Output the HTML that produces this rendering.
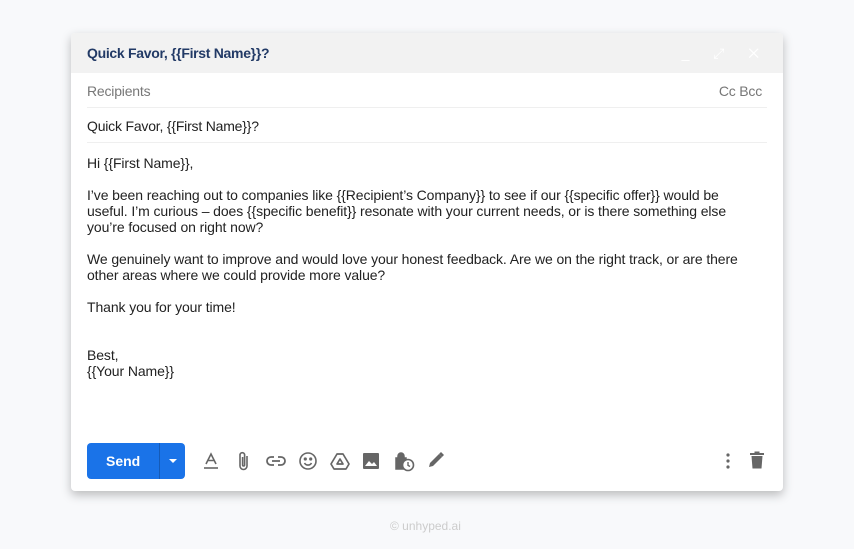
<!DOCTYPE html>
<html><head><meta charset="utf-8"><style>
*{margin:0;padding:0;box-sizing:border-box}
body{width:854px;height:549px;background:#f8f9fb;font-family:"Liberation Sans",sans-serif;position:relative;overflow:hidden}
.card{position:absolute;left:71px;top:33px;width:712px;height:458px;background:#fff;border-radius:4px;box-shadow:0 4px 10px rgba(0,0,0,.25);overflow:hidden}
.hdr{height:40px;background:#f2f2f2;padding-left:16px;line-height:40px;font-size:14px;color:#223a66;font-weight:bold;letter-spacing:-.3px}
.hicons{position:absolute;right:14px;top:0;color:#fff;font-size:14px;line-height:40px;letter-spacing:10px}
.row{margin:0 16px;height:35px;border-bottom:1px solid #efefef;font-size:14px;line-height:36px;letter-spacing:-.2px}
.body{padding:12px 0 0 16px;width:678px;font-size:14px;color:#222;line-height:16px;letter-spacing:-.1px}
.body p{margin-bottom:16px}
.send{position:absolute;left:16px;top:410px;width:98px;height:36px;background:#1a73e8;border-radius:4px;color:#fff;font-size:14px;font-weight:bold}
.send span{position:absolute;left:19px;top:10px}
.send i{position:absolute;left:72px;top:0;width:1px;height:36px;background:#155bb8}
.send b{position:absolute;left:82px;top:16px;border-left:4px solid transparent;border-right:4px solid transparent;border-top:4px solid #fff}
svg{position:absolute}
.foot{position:absolute;left:390px;top:519px;font-size:12px;color:#ccc}
</style></head><body>
<div class="card">
<div class="hdr">Quick Favor, {{First Name}}?</div>
<div class="hicons">_ ⤢ ✕</div>
<div class="row" style="color:#777">Recipients<span style="float:right;margin-right:5px">Cc Bcc</span></div>
<div class="row" style="color:#222">Quick Favor, {{First Name}}?</div>
<div class="body">
<p>Hi {{First Name}},</p>
<p>I’ve been reaching out to companies like {{Recipient’s Company}} to see if our {{specific offer}} would be<br>useful. I’m curious – does {{specific benefit}} resonate with your current needs, or is there something else<br>you’re focused on right now?</p>
<p>We genuinely want to improve and would love your honest feedback. Are we on the right track, or are there<br>other areas where we could provide more value?</p>
<p>Thank you for your time!</p>
<p style="margin-top:32px;margin-bottom:0">Best,<br>{{Your Name}}</p>
</div>
<div class="send"><span>Send</span><i></i><b></b></div>
<svg style="left:130px;top:418px" width="20" height="20" viewBox="0 0 20 20" fill="none" stroke="#666" stroke-width="1.6"><path d="M5 13L10 3L15 13M7 9.5h6"/><path d="M3 17h14"/></svg>
<svg style="left:163px;top:417px" width="20" height="22" viewBox="0 0 20 22" fill="none" stroke="#666" stroke-width="1.6"><path d="M13 6v10a3.5 3.5 0 0 1-7 0V5a2.3 2.3 0 0 1 4.6 0v10a1 1 0 0 1-2 0V7"/></svg>
<svg style="left:194px;top:418px" width="22" height="20" viewBox="0 0 22 20" fill="none" stroke="#666" stroke-width="1.8"><path d="M9 6H6a4 4 0 0 0 0 8h3M13 6h3a4 4 0 0 1 0 8h-3M7 10h8"/></svg>
<svg style="left:227px;top:418px" width="20" height="20" viewBox="0 0 20 20" fill="none" stroke="#666" stroke-width="1.6"><circle cx="10" cy="10" r="8"/><circle cx="7.3" cy="8" r=".8" fill="#666"/><circle cx="12.7" cy="8" r=".8" fill="#666"/><path d="M6.5 12a4 4 0 0 0 7 0"/></svg>
<svg style="left:258px;top:418px" width="22" height="20" viewBox="0 0 22 20" fill="none" stroke="#666" stroke-width="1.7" stroke-linejoin="round"><path d="M8 3h6l6 10-3 5H5l-3-5z"/><path d="M11 8l3 5H8z"/></svg>
<svg style="left:291px;top:419px" width="18" height="18" viewBox="0 0 18 18"><rect x="1" y="1" width="16" height="16" rx="1" fill="#666"/><path d="M3 14l4-5 3 3 2-2 3 4z" fill="#fff"/></svg>
<svg style="left:322px;top:417px" width="22" height="22" viewBox="0 0 22 22"><path d="M3 8h10v11H3z M5 8V6a3 3 0 0 1 6 0v2" fill="#666" stroke="#666" stroke-width="1.5"/><circle cx="15" cy="15" r="5.5" fill="#fff" stroke="#666" stroke-width="1.6"/><path d="M15 12v3.3l2 1.2" stroke="#666" stroke-width="1.4" fill="none"/></svg>
<svg style="left:355px;top:417px" width="20" height="20" viewBox="0 0 20 20"><path d="M3 17l1-4 9-9 3 3-9 9z" fill="#666"/><path d="M13 4l2-2 3 3-2 2z" fill="#666"/></svg>
<svg style="left:654px;top:420px" width="6" height="16" viewBox="0 0 6 16" fill="#666"><circle cx="3" cy="2" r="1.6"/><circle cx="3" cy="8" r="1.6"/><circle cx="3" cy="14" r="1.6"/></svg>
<svg style="left:679px;top:418px" width="14" height="18" viewBox="0 0 14 18" fill="#666"><rect x="0" y="2" width="14" height="2"/><rect x="4.5" y="0.5" width="5" height="2"/><path d="M1.5 5h11l-1 12.5h-9z"/></svg>
</div>
<div class="foot">© unhyped.ai</div>
</body></html>
